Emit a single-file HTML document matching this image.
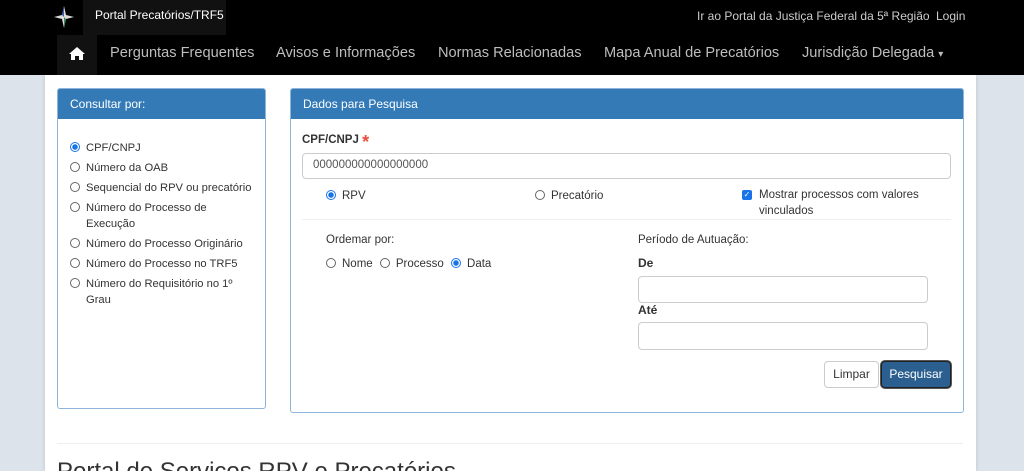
<!DOCTYPE html>
<html style="overflow:hidden"><head><meta charset="utf-8"><style>
*{box-sizing:border-box;margin:0;padding:0}
html,body{width:1024px;height:471px;overflow:hidden}
body{background:#dde3ea;font-family:"Liberation Sans",Arial,sans-serif;color:#333;font-size:12px;position:relative}
.a{position:absolute}
.hdr{left:0;top:0;width:1024px;height:75px;background:#000}
.nav{top:45px;font-size:14.6px;color:#bdbdbd}
.wrap{left:45px;top:75px;width:931px;height:396px;background:#fff;box-shadow:0 0 4px rgba(0,0,0,.15)}
.panel{border:1px solid #8fb4da;border-radius:3px;background:#fff}
.ph{background:#337ab7;color:#fff;height:30px;line-height:30px;padding-left:12px;font-size:12px;border-radius:2px 2px 0 0}
.r{display:inline-block;width:10px;height:10px;border:1px solid #666;border-radius:50%;vertical-align:-1px;margin-right:6px;background:#fff}
.r.on{border-color:#1a73e8;background:radial-gradient(circle,#1a73e8 2.5px,#fff 3px)}
.in{border:1px solid #ccc;border-radius:4px;background:#fff}
.lst{font-size:11.2px}
.lst div{margin-bottom:4px;line-height:16px}
.f{font-size:11.5px;line-height:16px}
</style></head><body>
<div class="a hdr"></div>
<div class="a" style="left:83px;top:0;width:143px;height:35px;background:#111"></div>
<svg class="a" style="left:53px;top:4px" width="22" height="26" viewBox="0 0 22 26"><path d="M11 2 L13 11 L21 13 L13 15 L11 24 L9 15 L1 13 L9 11Z" fill="#ddd"/><path d="M11 13 L13 15 L11 24Z" fill="#3a8a5a"/><path d="M11 13 L9 11 L11 2Z" fill="#3b5da8"/></svg>
<div class="a" style="left:95px;top:8px;color:#fff;font-size:12px">Portal Precatórios/TRF5</div>
<div class="a" style="left:697px;top:9px;color:#ccc;font-size:12px">Ir ao Portal da Justiça Federal da 5ª Região</div>
<div class="a" style="left:936px;top:9px;color:#ccc;font-size:12px">Login</div>
<div class="a" style="left:57px;top:35px;width:40px;height:40px;background:#111"></div>
<svg class="a" style="left:68px;top:46px" width="18" height="15" viewBox="0 0 18 15"><path d="M9 1 L1 8 L3 8 L3 14 L7 14 L7 10 L11 10 L11 14 L15 14 L15 8 L17 8Z" fill="#fff"/></svg>
<div class="a nav" style="left:110px">Perguntas Frequentes</div>
<div class="a nav" style="left:276px">Avisos e Informações</div>
<div class="a nav" style="left:438px">Normas Relacionadas</div>
<div class="a nav" style="left:604px">Mapa Anual de Precatórios</div>
<div class="a nav" style="left:802px">Jurisdição Delegada <span style="font-size:10px">▾</span></div>
<div class="a wrap"></div>
<div class="a panel" style="left:57px;top:88px;width:209px;height:321px">
<div class="ph">Consultar por:</div>
<div class="lst" style="padding:21px 11px 0 12px">
<div><span class="r on"></span>CPF/CNPJ</div>
<div><span class="r"></span>Número da OAB</div>
<div style="white-space:nowrap"><span class="r"></span>Sequencial do RPV ou precatório</div>
<div style="padding-left:16px;text-indent:-16px"><span class="r"></span>Número do Processo de<br>Execução</div>
<div><span class="r"></span>Número do Processo Originário</div>
<div><span class="r"></span>Número do Processo no TRF5</div>
<div style="padding-left:16px;text-indent:-16px"><span class="r"></span>Número do Requisitório no 1º<br>Grau</div>
</div></div>
<div class="a panel" style="left:290px;top:88px;width:674px;height:325px">
<div class="ph">Dados para Pesquisa</div></div>
<div class="a" style="left:302px;top:134px;font-weight:bold;font-size:11.5px">CPF/CNPJ <span style="color:#e74c3c;font-size:18px;line-height:10px;vertical-align:-5px">*</span></div>
<div class="a in" style="left:302px;top:153px;width:649px;height:26px;padding:5px 10px;color:#555;font-size:11.5px">000000000000000000</div>
<div class="a f" style="left:326px;top:188px"><span class="r on"></span>RPV</div>
<div class="a f" style="left:535px;top:188px"><span class="r"></span>Precatório</div>
<span class="a" style="left:742px;top:190px;width:10px;height:10px;background:#1a73e8;border-radius:2px;color:#fff;font-size:8px;line-height:10px;text-align:center">✓</span>
<div class="a f" style="left:759px;top:187px">Mostrar processos com valores<br>vinculados</div>
<div class="a" style="left:302px;top:219px;width:649px;height:1px;background:#eee"></div>
<div class="a f" style="left:326px;top:232px">Ordemar por:</div>
<div class="a f" style="left:326px;top:256px"><span class="r"></span>Nome <span style="margin-left:4px" class="r"></span>Processo <span style="margin-left:4px" class="r on"></span>Data</div>
<div class="a f" style="left:638px;top:232px">Período de Autuação:</div>
<div class="a" style="left:638px;top:256px;font-weight:bold">De</div>
<div class="a in" style="left:638px;top:276px;width:290px;height:27px"></div>
<div class="a" style="left:638px;top:303px;font-weight:bold">Até</div>
<div class="a in" style="left:638px;top:322px;width:290px;height:28px"></div>
<div class="a in" style="left:824px;top:361px;width:55px;height:27px;line-height:25px;text-align:center">Limpar</div>
<div class="a" style="left:881px;top:361px;width:70px;height:27px;line-height:25px;text-align:center;background:#2a5f8f;color:#fff;border:1px solid #222;border-radius:4px;box-shadow:0 0 0 1px #555">Pesquisar</div>
<div class="a" style="left:57px;top:443px;width:906px;height:1px;background:#eee"></div>
<div class="a" style="left:57px;top:458px;font-size:24px;color:#333">Portal de Serviços RPV e Precatórios</div>
</body></html>
